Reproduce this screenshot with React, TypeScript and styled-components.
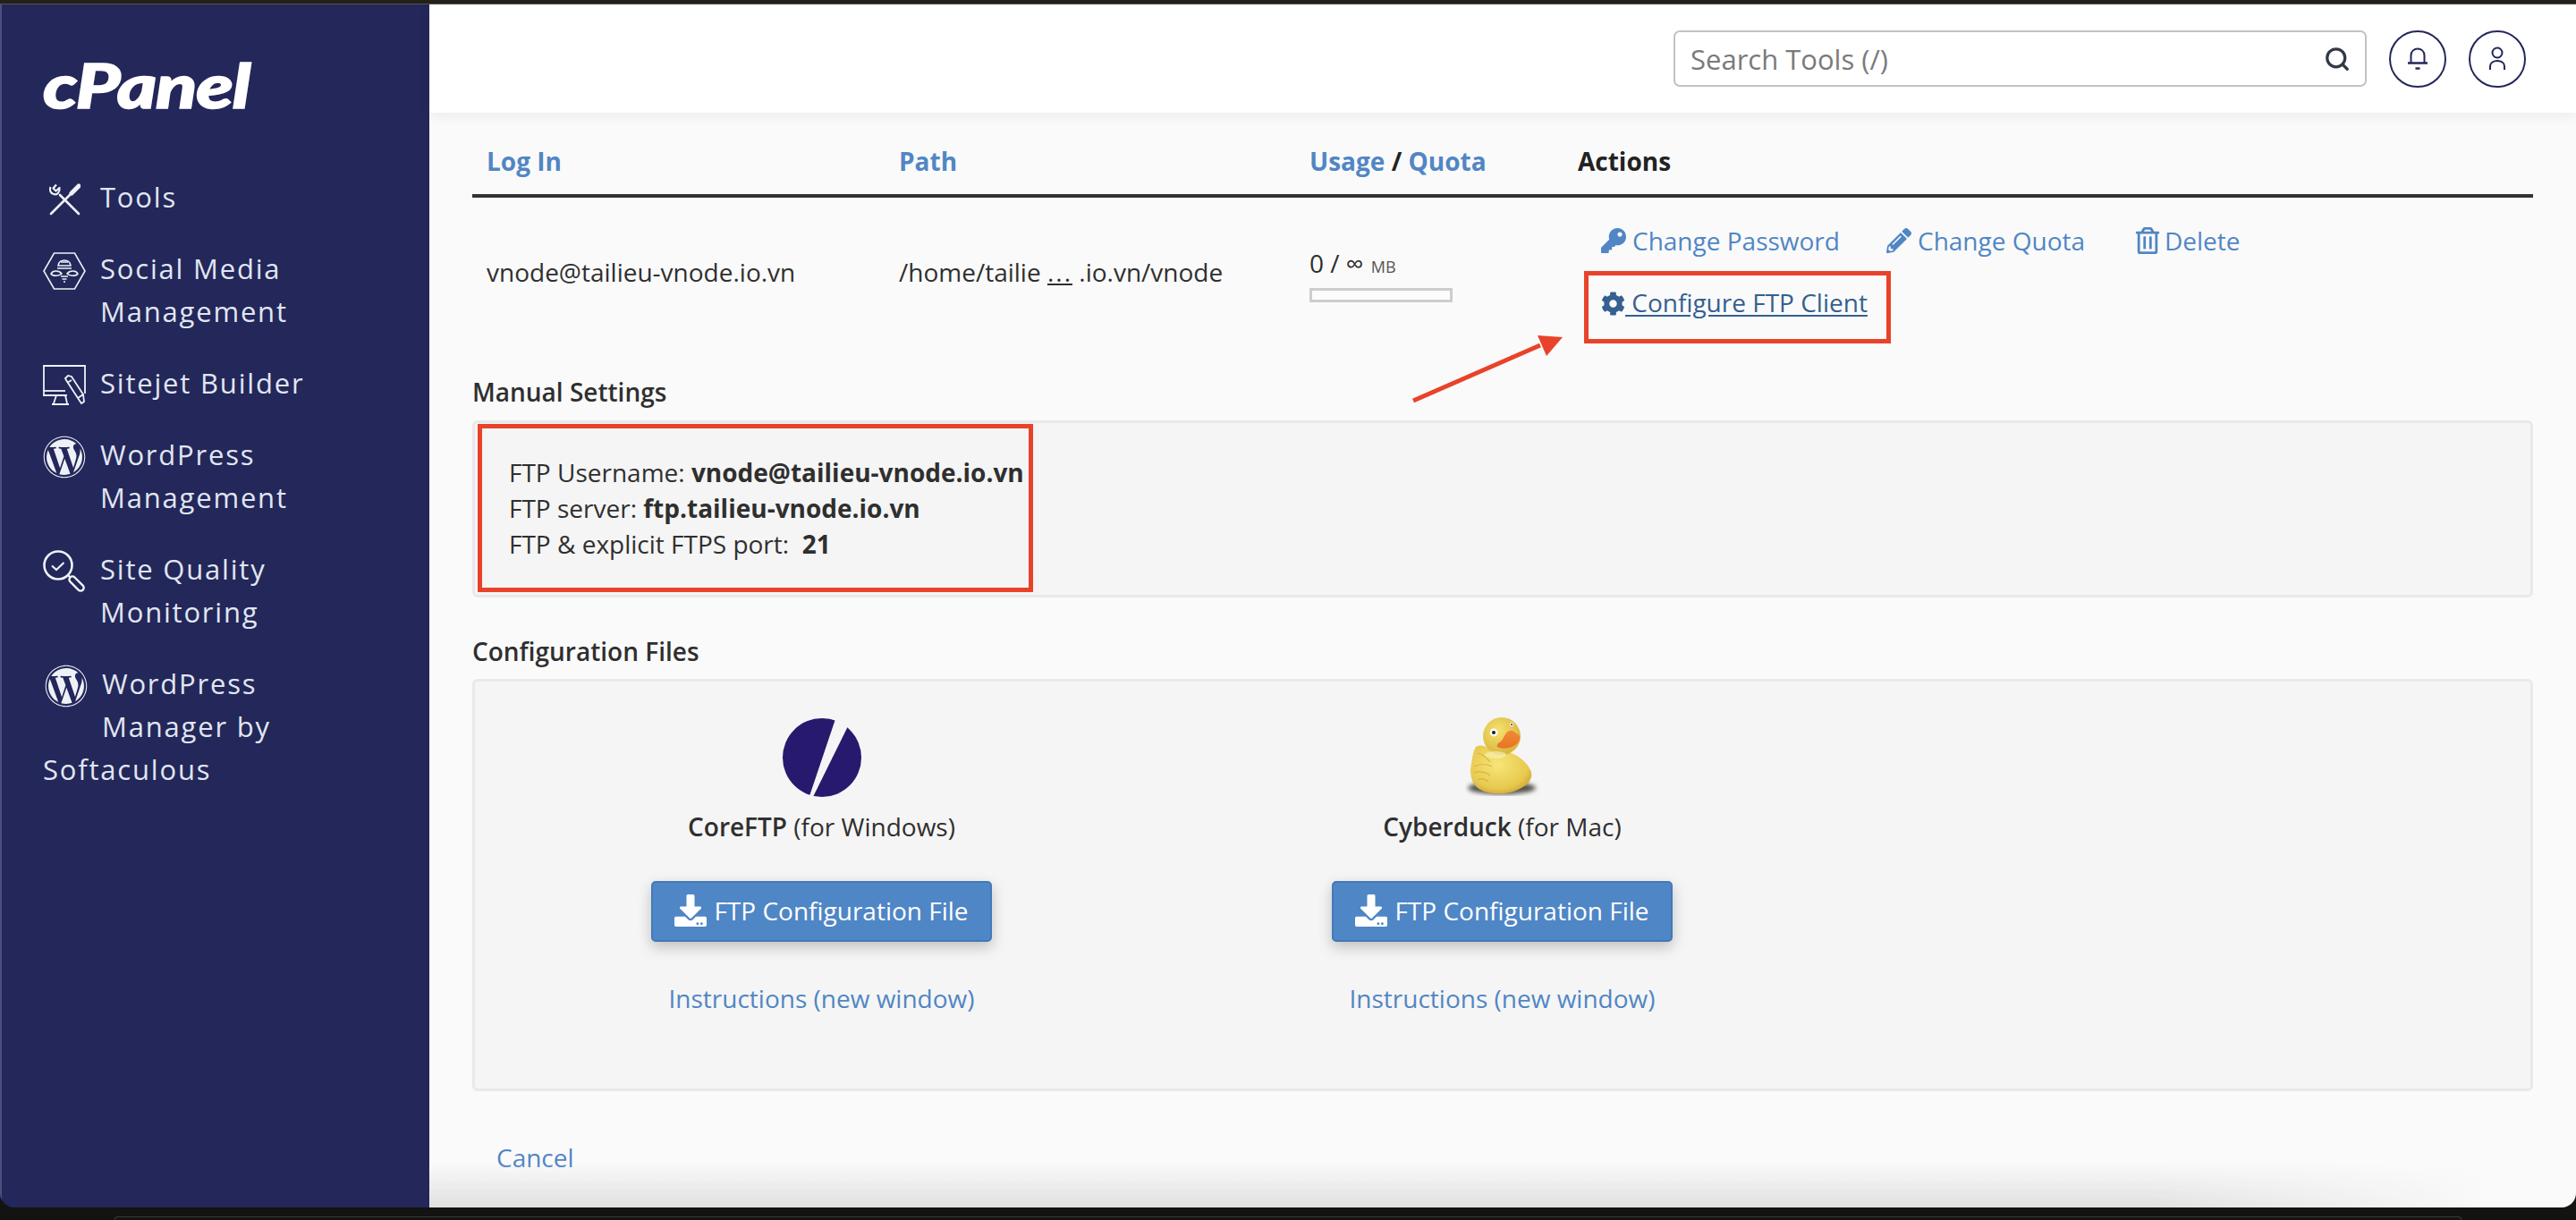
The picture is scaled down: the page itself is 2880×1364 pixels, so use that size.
import React from "react";
import styled, { createGlobalStyle } from "styled-components";
import { Search } from "lucide-react";
import { FaCog, FaDownload, FaKey, FaPencilAlt, FaRegTrashAlt, FaWordpress } from "react-icons/fa";

const navy = "#23275a";
const link = "#5186c4";
const red = "#e8432a";

const GlobalStyle = createGlobalStyle`
  * { box-sizing: border-box; }
  html, body { margin: 0; height: 100%; background: #131311; }
  body {
    font-family: "Open Sans", "Liberation Sans", sans-serif;
    color: #2f2f2f;
    overflow: hidden;
  }
`;

const Desk = styled.div`
  width: 2880px;
  height: 1364px;
  display: flex;
  flex-direction: column;
  background: #131311;
  overflow: hidden;
`;

const TopEdge = styled.div`
  height: 5px;
  flex: none;
  background: #24211c;
  border-bottom: 1px solid #55534f;
`;

const BottomEdge = styled.div`
  flex: none;
  height: 4px;
  margin: 10px 128px 0;
  border: 1px solid #3c3c3c;
  border-bottom: 0;
  border-radius: 14px 14px 0 0;
`;

const Window = styled.div`
  flex: none;
  height: 1345px;
  display: flex;
  border-radius: 0 0 16px 16px;
  overflow: hidden;
`;

const Sidebar = styled.aside`
  flex: none;
  width: 480px;
  padding: 58px 48px 0;
  background: ${navy};
  border-left: 2px solid #4b4f80;
`;

const Logo = styled.div`
  height: 64px;
  margin-left: -2px;
  color: #fff;
  font-family: Lato, "Open Sans", sans-serif;
  font-size: 68px;
  font-weight: 900;
  font-style: italic;
  letter-spacing: -1px;
  line-height: 64px;
  -webkit-text-stroke: 1.5px #fff;
  transform: scaleX(1.25);
  transform-origin: left center;
`;

const NavList = styled.nav`
  margin-top: 69px;
  margin-left: -2px;
  display: flex;
  flex-direction: column;
  gap: 32px;
`;

const NavItem = styled.a`
  display: flow-root;
  color: #e1e6f1;
  font-size: 31px;
  line-height: 48px;
  letter-spacing: 1.8px;
`;

const NavIcon = styled.span<{ $shift?: number; $single?: boolean }>`
  float: left;
  width: 48px;
  height: 48px;
  margin: 3px 16px ${(p) => (p.$single ? "-3px" : "0")} ${(p) => p.$shift ?? 0}px;
  color: #eef1f6;
  display: flex;
  align-items: center;
  justify-content: center;

  & svg {
    display: block;
  }
`;

const Main = styled.main`
  position: relative;
  flex: 1;
  min-width: 0;
  display: flex;
  flex-direction: column;
  background: #fafafa;
`;

const Header = styled.header`
  position: relative;
  z-index: 1;
  flex: none;
  height: 121px;
  padding-right: 56px;
  display: flex;
  align-items: center;
  justify-content: flex-end;
  gap: 25px;
  background: #fff;
  box-shadow: 0 4px 14px rgba(0, 0, 0, 0.06);
`;

const SearchBox = styled.label`
  width: 775px;
  height: 63px;
  padding: 0 16px 0 17px;
  display: flex;
  align-items: center;
  background: #fff;
  border: 2px solid #c2c2c2;
  border-radius: 7px;
  color: #2f3a45;
`;

const SearchInput = styled.input`
  flex: 1;
  min-width: 0;
  border: 0;
  outline: 0;
  padding: 0;
  background: transparent;
  font: inherit;
  font-size: 31px;

  &::placeholder {
    color: #7a7a7a;
    opacity: 1;
  }
`;

const RoundButton = styled.button`
  width: 64px;
  height: 64px;
  padding: 0;
  display: flex;
  align-items: center;
  justify-content: center;
  background: #fff;
  border: 2px solid ${navy};
  border-radius: 50%;
  color: ${navy};
`;

const Content = styled.div`
  flex: 1;
  padding: 34px 48px 0;
`;

const Fade = styled.div`
  position: absolute;
  left: 0;
  right: 0;
  bottom: 0;
  height: 50px;
  background: linear-gradient(to top, #e0e0e0, rgba(250, 250, 250, 0));
  mask-image: linear-gradient(to right, #000 80%, transparent 96%);
  pointer-events: none;
`;

const columns = "461px 459px 300px 1fr";

const TableHead = styled.div`
  display: grid;
  grid-template-columns: ${columns};
  padding-bottom: 17px;
  border-bottom: 4px solid #333;
`;

const HeadCell = styled.div`
  padding-left: 16px;
  font-size: 28px;
  font-weight: 700;
  line-height: 40px;
  color: #222;
`;

const HeadLink = styled.a`
  color: ${link};
`;

const TableRow = styled.div`
  display: grid;
  grid-template-columns: ${columns};
  height: 197px;
  align-items: start;
`;

const Cell = styled.div<{ $top: number }>`
  padding: ${(p) => p.$top}px 0 0 16px;
  font-size: 28px;
  line-height: 40px;
`;

const Dots = styled.span`
  text-decoration: underline;
  letter-spacing: 2px;
`;

const Unit = styled.span`
  font-size: 18px;
  color: #555;
  margin-left: 1px;
`;

const Meter = styled.div`
  width: 160px;
  height: 16px;
  margin-top: 4px;
  background: #fcfcfc;
  border: 3px solid #cdcdcd;
`;

const ActionRow = styled.div`
  display: flex;
  margin-left: 26px;
`;

const ActionLink = styled.a<{ $width?: number; $gap?: number }>`
  display: inline-flex;
  align-items: center;
  gap: ${(p) => p.$gap ?? 7}px;
  width: ${(p) => (p.$width ? `${p.$width}px` : "auto")};
  color: ${link};
  white-space: nowrap;
`;

const Callout = styled.div`
  position: relative;
  width: 343px;
  height: 81px;
  margin: 14px 0 0 7px;
  padding: 10px 0 0 14px;
  border: 5px solid ${red};
`;

const ConfigureLink = styled.a`
  color: #35608f;
  white-space: pre;
  text-decoration: underline;
  text-underline-offset: 3px;

  & svg {
    vertical-align: -4px;
  }
`;

const Arrow = styled.svg`
  position: absolute;
  right: calc(100% + 29px);
  top: 64px;
`;

const SectionTitle = styled.h2<{ $gap?: number }>`
  margin: ${(p) => p.$gap ?? 0}px 0 0;
  font-size: 28px;
  font-weight: 600;
  line-height: 40px;
`;

const Panel = styled.section`
  background: #f5f5f5;
  border: 3px solid #e9e9e9;
  border-radius: 6px;
`;

const ManualPanel = styled(Panel)`
  height: 198px;
  margin-top: 12px;
  padding: 1px 0 0 3px;
`;

const ManualBox = styled.div`
  width: 621px;
  height: 188px;
  padding: 29px 0 0 30px;
  border: 5px solid ${red};
  font-size: 28px;
  line-height: 40px;
`;

const ManualLine = styled.div`
  white-space: nowrap;
`;

const FilesPanel = styled(Panel)`
  height: 461px;
  margin-top: 11px;
  padding: 40px 0 0 7px;
  display: grid;
  grid-template-columns: repeat(3, 761px);
`;

const Client = styled.div`
  display: flex;
  flex-direction: column;
  align-items: center;
`;

const ClientLogo = styled.div`
  height: 90px;
  display: flex;
  align-items: center;
  justify-content: center;
`;

const ClientName = styled.div`
  margin-top: 12px;
  font-size: 28px;
  line-height: 40px;

  & b {
    font-weight: 600;
  }
`;

const DownloadButton = styled.a`
  width: 381px;
  height: 68px;
  margin-top: 41px;
  padding-bottom: 2px;
  display: flex;
  align-items: center;
  justify-content: center;
  gap: 8px;
  background: #4f86c6;
  border: 2px solid #4479b7;
  border-radius: 5px;
  box-shadow: 0 6px 16px rgba(0, 0, 0, 0.22);
  color: #fff;
  font-size: 28px;
`;

const Instructions = styled.a`
  margin-top: 43px;
  color: ${link};
  font-size: 28px;
  line-height: 40px;
`;

const Cancel = styled.a`
  display: block;
  margin: 54px 0 0 27px;
  color: ${link};
  font-size: 28px;
  line-height: 40px;
`;

const ToolsIcon = () => (
  <svg width="36" height="36" viewBox="0 0 36 36" fill="none" stroke="currentColor">
    <path d="M34 3 26 11" strokeWidth="5" strokeLinecap="round" />
    <path d="M25 12 3 34" strokeWidth="2.6" strokeLinecap="round" />
    <path d="M34 34 13 13" strokeWidth="2.6" strokeLinecap="round" />
    <path d="M9 1.5 5.5 5.5 8.5 8.5 12.5 5 C13 9 10.5 13.5 6 12 C2.5 11 1 7.5 2.5 4" strokeWidth="2.2" strokeLinejoin="round" />
  </svg>
);

const SocialIcon = () => (
  <svg width="48" height="42" viewBox="0 0 48 42" fill="none" stroke="currentColor" strokeWidth="1.6">
    <path d="M12.5 1h23L47 21 35.5 41h-23L1 21z" />
    <path d="M17 15c1-8 13-8 14 0z" />
    <path d="M20 11h8M16 18h16" />
    <path d="M21 24c-3-4-10-4-12 0 2 3 9 3 12 0zM27 24c3-4 10-4 12 0-2 3-9 3-12 0z" />
    <path d="M20 27h8M21.5 30h5M23 33h2" />
  </svg>
);

const SitejetIcon = () => (
  <svg width="48" height="46" viewBox="0 0 48 46" fill="none" stroke="currentColor" strokeWidth="1.8">
    <path d="M47 32V1H1v33h26" />
    <path d="M1 29h24" />
    <path d="M13 34h12l2 9M15 34l-3 9M10 44h19" />
    <path d="M25 15l3-3 4 1 13 20-6 4-13-20zM32 17l-5 3M39 37l4 6 3-2-1-8" />
  </svg>
);

const QualityIcon = () => (
  <svg width="48" height="48" viewBox="0 0 48 48" fill="none" stroke="currentColor">
    <circle cx="17" cy="17" r="15.5" strokeWidth="2.6" />
    <path d="M10 17.5l5 4.5 8.5-8" strokeWidth="2.2" />
    <path d="M28 28l3 3" strokeWidth="2.4" />
    <rect x="-3.5" y="0" width="7" height="20" rx="3.5" strokeWidth="2.4" transform="translate(30.5 30.5) rotate(-45)" />
  </svg>
);

const BellIcon = () => (
  <svg width="24" height="25" viewBox="0 0 24 25" fill="none" stroke="currentColor" strokeWidth="2">
    <path d="M4.5 17V9c0-10 15-10 15 0v8" />
    <path d="M1 17.5h22" strokeWidth="2.4" />
    <path d="M9.5 23.5h5" strokeWidth="2.4" />
  </svg>
);

const UserIcon = () => (
  <svg width="20" height="27" viewBox="0 0 20 27" fill="none" stroke="currentColor" strokeWidth="2">
    <ellipse cx="10" cy="7" rx="5.5" ry="5.5" />
    <path d="M2 26v-4c0-8 16-8 16 0v4" />
  </svg>
);

const CoreFtpLogo = () => (
  <svg width="88" height="90" viewBox="0 0 88 90">
    <circle cx="44" cy="45" r="44" fill="#27196e" />
    <path d="M60 -1 73 10 33 91 30 88z" fill="#f5f5f5" />
  </svg>
);

const DuckLogo = () => (
  <svg width="84" height="90" viewBox="0 0 84 90">
    <defs>
      <radialGradient id="duckBody" cx="45%" cy="40%" r="70%">
        <stop offset="0%" stopColor="#f6e677" />
        <stop offset="70%" stopColor="#e8c94f" />
        <stop offset="100%" stopColor="#c79a2c" />
      </radialGradient>
      <radialGradient id="duckHead" cx="40%" cy="35%" r="70%">
        <stop offset="0%" stopColor="#f5e26d" />
        <stop offset="100%" stopColor="#d8b23c" />
      </radialGradient>
      <linearGradient id="duckBill" x1="0" y1="0" x2="0" y2="1">
        <stop offset="0%" stopColor="#f0893a" />
        <stop offset="100%" stopColor="#e87422" />
      </linearGradient>
      <filter id="duckBlur">
        <feGaussianBlur stdDeviation="2.5" />
      </filter>
    </defs>
    <ellipse cx="41" cy="79" rx="38" ry="7" fill="#55524a" filter="url(#duckBlur)" />
    <path d="M12 33c6-4 14 0 18 6 16-6 38 6 44 22 2 10-6 17-20 22-14 4-30 3-40-4C6 72 5 60 7 52c1-7 2-14 5-19z" fill="url(#duckBody)" />
    <path d="M10 55c6-3 14-3 20 0M10 62c6-2 13-1 18 3M14 70c4-2 9-1 12 2M14 40c5 1 10 5 14 10" fill="none" stroke="#d6b344" strokeWidth="1.2" />
    <ellipse cx="41" cy="21" rx="21" ry="21" fill="url(#duckHead)" />
    <ellipse cx="34" cy="42" rx="12" ry="4" fill="#f8efb0" opacity="0.7" />
    <path d="M45 19c4-6 9-5 12-1 3 1 5 3 4 7-1 3-3 4-5 6-5 4-15 5-20 2-1-3 2-5 4-6 2-2 3-5 5-8z" fill="url(#duckBill)" />
    <circle cx="32" cy="17" r="4.4" fill="#fff" />
    <circle cx="32" cy="17" r="2" fill="#1c1c1c" />
    <circle cx="52" cy="8" r="2" fill="#fff" />
    <circle cx="52" cy="8" r="1" fill="#333" />
  </svg>
);

const App = () => {
  return (
    <>
      <GlobalStyle />
      <Desk>
        <TopEdge />
        <Window>
          <Sidebar>
            <Logo>cPanel</Logo>
            <NavList>
              <NavItem>
                <NavIcon $single><ToolsIcon /></NavIcon>
                Tools
              </NavItem>
              <NavItem>
                <NavIcon><SocialIcon /></NavIcon>
                Social Media Management
              </NavItem>
              <NavItem>
                <NavIcon $single><SitejetIcon /></NavIcon>
                Sitejet Builder
              </NavItem>
              <NavItem>
                <NavIcon><FaWordpress size={48} /></NavIcon>
                WordPress Management
              </NavItem>
              <NavItem>
                <NavIcon><QualityIcon /></NavIcon>
                Site Quality Monitoring
              </NavItem>
              <NavItem>
                <NavIcon $shift={2}><FaWordpress size={48} /></NavIcon>
                WordPress Manager by Softaculous
              </NavItem>
            </NavList>
          </Sidebar>
          <Main>
            <Header>
              <SearchBox>
                <SearchInput placeholder="Search Tools (/)" readOnly />
                <Search size={30} strokeWidth={2.6} />
              </SearchBox>
              <RoundButton><BellIcon /></RoundButton>
              <RoundButton><UserIcon /></RoundButton>
            </Header>
            <Content>
              <TableHead>
                <HeadCell><HeadLink>Log In</HeadLink></HeadCell>
                <HeadCell><HeadLink>Path</HeadLink></HeadCell>
                <HeadCell><HeadLink>Usage</HeadLink> / <HeadLink>Quota</HeadLink></HeadCell>
                <HeadCell>Actions</HeadCell>
              </TableHead>
              <TableRow>
                <Cell $top={63}>vnode@tailieu-vnode.io.vn</Cell>
                <Cell $top={63}>/home/tailie <Dots>...</Dots> .io.vn/vnode</Cell>
                <Cell $top={53}>
                  0 / ∞ <Unit>MB</Unit>
                  <Meter />
                </Cell>
                <Cell $top={28}>
                  <ActionRow>
                    <ActionLink $width={319}><FaKey size={28} />Change Password</ActionLink>
                    <ActionLink $width={277}><FaPencilAlt size={28} />Change Quota</ActionLink>
                    <ActionLink $gap={4}><FaRegTrashAlt size={30} />Delete</ActionLink>
                  </ActionRow>
                  <Callout>
                    <ConfigureLink><FaCog size={27} /> Configure FTP Client</ConfigureLink>
                    <Arrow width="175" height="80" viewBox="0 0 175 80">
                      <path d="M8 76 150 14" stroke={red} strokeWidth="5" />
                      <path d="M175 5 147 3 157 26z" fill={red} />
                    </Arrow>
                  </Callout>
                </Cell>
              </TableRow>
              <SectionTitle>Manual Settings</SectionTitle>
              <ManualPanel>
                <ManualBox>
                  <ManualLine>FTP Username: <b>vnode@tailieu-vnode.io.vn</b></ManualLine>
                  <ManualLine>FTP server: <b>ftp.tailieu-vnode.io.vn</b></ManualLine>
                  <ManualLine>FTP &amp; explicit FTPS port:&nbsp; <b>21</b></ManualLine>
                </ManualBox>
              </ManualPanel>
              <SectionTitle $gap={40}>Configuration Files</SectionTitle>
              <FilesPanel>
                <Client>
                  <ClientLogo><CoreFtpLogo /></ClientLogo>
                  <ClientName><b>CoreFTP</b> (for Windows)</ClientName>
                  <DownloadButton><FaDownload size={36} />FTP Configuration File</DownloadButton>
                  <Instructions>Instructions (new window)</Instructions>
                </Client>
                <Client>
                  <ClientLogo><DuckLogo /></ClientLogo>
                  <ClientName><b>Cyberduck</b> (for Mac)</ClientName>
                  <DownloadButton><FaDownload size={36} />FTP Configuration File</DownloadButton>
                  <Instructions>Instructions (new window)</Instructions>
                </Client>
              </FilesPanel>
              <Cancel>Cancel</Cancel>
            </Content>
            <Fade />
          </Main>
        </Window>
        <BottomEdge />
      </Desk>
    </>
  );
};

export default App;
